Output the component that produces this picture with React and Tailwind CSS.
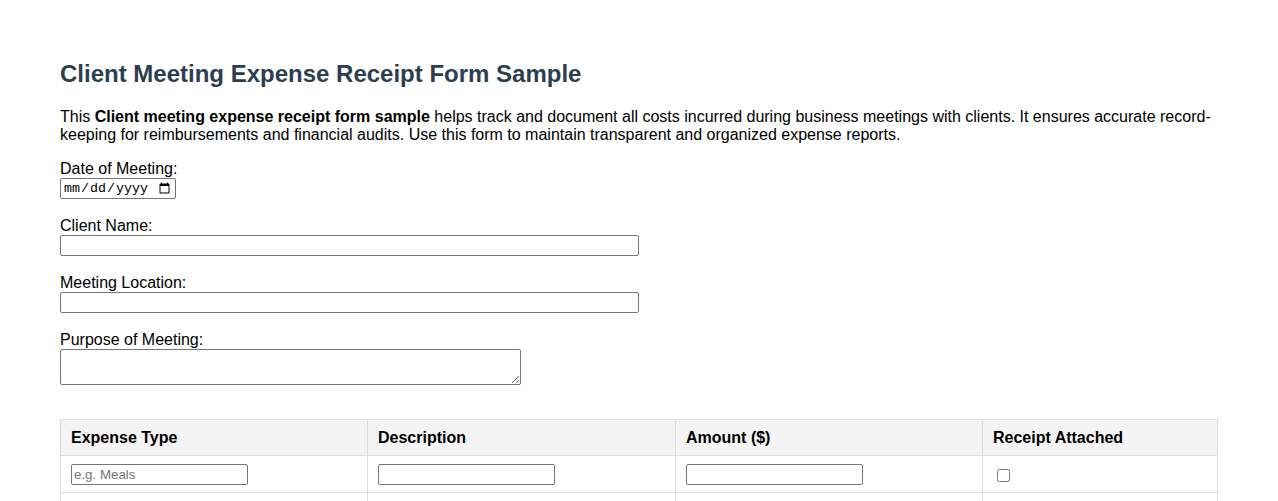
import React from 'react';

const inputCls = 'border border-[#767676] rounded-[2px] px-[2px] py-[1px] text-[13.33px] leading-[15px] bg-white';

const Field = ({ label, children }) => (
  <div className="mb-[18px]">
    <label className="block">{label}</label>
    {children}
  </div>
);

const rows = [
  { placeholder: 'e.g. Meals' },
  { placeholder: 'e.g. Transportation' },
  { placeholder: 'e.g. Parking' },
];

const App = () => {
  return (
    <div className="min-h-screen bg-white px-[60px] pt-[40px] pb-10 text-black text-[16px] leading-[normal] font-['Liberation_Sans',Arial,sans-serif]">
      <h2 className="text-[24px] font-bold text-[#2c3e50] mt-[20px] mb-[20px] leading-[27.6px]">
        Client Meeting Expense Receipt Form Sample
      </h2>
      <p className="mb-[16px] leading-[18.4px]">
        This <strong>Client meeting expense receipt form sample</strong> helps track and document all costs incurred during business meetings with clients. It ensures accurate record-keeping for reimbursements and financial audits. Use this form to maintain transparent and organized expense reports.
      </p>

      <form>
        <Field label="Date of Meeting:">
          <input type="date" className={`${inputCls} w-[116px] h-[21px] font-['Liberation_Mono',monospace] text-[12px]`} />
        </Field>
        <Field label="Client Name:">
          <input type="text" className={`${inputCls} w-1/2 h-[21px]`} />
        </Field>
        <Field label="Meeting Location:">
          <input type="text" className={`${inputCls} w-1/2 h-[21px]`} />
        </Field>
        <div className="mb-[34px]">
          <label className="block">Purpose of Meeting:</label>
          <textarea className={`${inputCls} block w-[461px] h-[36px]`} />
        </div>

        <table className="w-full border-collapse border border-[#dddddd]">
          <thead>
            <tr className="bg-[#f4f4f4]">
              <th className="w-[307px] border border-[#dddddd] px-[10px] py-[8.5px] text-left font-bold">Expense Type</th>
              <th className="w-[308px] border border-[#dddddd] px-[10px] py-[8.5px] text-left font-bold">Description</th>
              <th className="w-[307px] border border-[#dddddd] px-[10px] py-[8.5px] text-left font-bold">Amount ($)</th>
              <th className="border border-[#dddddd] px-[10px] py-[8.5px] text-left font-bold">Receipt Attached</th>
            </tr>
          </thead>
          <tbody>
            {rows.map((r, i) => (
              <tr key={i}>
                <td className="border border-[#dddddd] px-[10px] py-[7.5px]">
                  <input type="text" placeholder={r.placeholder} className={`${inputCls} w-[177px] h-[21px] placeholder:text-[#757575] align-middle`} />
                </td>
                <td className="border border-[#dddddd] px-[10px] py-[7.5px]">
                  <input type="text" className={`${inputCls} w-[177px] h-[21px] align-middle`} />
                </td>
                <td className="border border-[#dddddd] px-[10px] py-[7.5px]">
                  <input type="text" className={`${inputCls} w-[177px] h-[21px] align-middle`} />
                </td>
                <td className="border border-[#dddddd] px-[10px] py-[7.5px]">
                  <input type="checkbox" className="ml-[4px] w-[13px] h-[13px] align-middle" />
                </td>
              </tr>
            ))}
          </tbody>
        </table>
      </form>
    </div>
  );
};

export default App;
